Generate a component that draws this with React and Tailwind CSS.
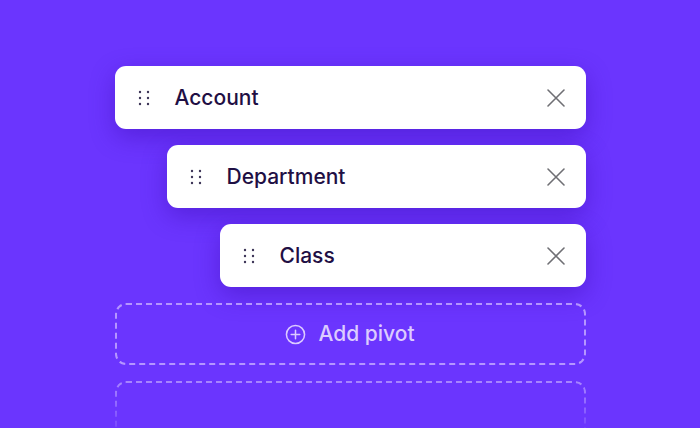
import React from "react";

function Grip() {
  return (
    <svg width="12" height="16" viewBox="0 0 12 16" className="shrink-0">
      {[0, 1].map((c) =>
        [0, 1, 2].map((r) => (
          <circle key={`${c}-${r}`} cx={2 + c * 8} cy={2 + r * 6} r="1.2" fill="#3d3558" />
        ))
      )}
    </svg>
  );
}

function Close() {
  return (
    <svg width="20" height="20" viewBox="0 0 20 20" className="shrink-0">
      <path d="M2 2L18 18M18 2L2 18" stroke="#6f6f74" strokeWidth="1.6" strokeLinecap="round" />
    </svg>
  );
}

function Card({ label, ml }) {
  return (
    <div
      className={`${ml} shrink-0 h-[63px] flex items-center bg-white rounded-[11px] pl-[23px] pr-[20px] shadow-[0_8px_24px_rgba(60,10,180,0.45)]`}
    >
      <Grip />
      <span className="ml-[25px] text-[21px] font-medium text-[#1f0f44] flex-1">{label}</span>
      <Close />
    </div>
  );
}

export default function App() {
  return (
    <div
      className="w-[700px] h-[428px] overflow-hidden bg-[#6b35fe] flex justify-center pt-[66px]"
      style={{ fontFamily: "Inter, 'Noto Sans', sans-serif" }}
    >
      <div className="w-[471px] flex flex-col gap-4">
        <Card label="Account" ml="ml-0" />
        <Card label="Department" ml="ml-[52px]" />
        <Card label="Class" ml="ml-[105px]" />
        <div className="shrink-0 h-[62px] rounded-[11px] border-2 border-dashed border-[#b596ff] flex items-center justify-center gap-[12px] text-[21px] font-medium text-[#dccbff]">
          <svg width="21" height="21" viewBox="0 0 22 22">
            <circle cx="11" cy="11" r="9.5" fill="none" stroke="#dccbff" strokeWidth="1.6" />
            <path d="M11 6.5V15.5M6.5 11H15.5" stroke="#dccbff" strokeWidth="1.6" strokeLinecap="round" />
          </svg>
          <span>Add pivot</span>
        </div>
        <div className="shrink-0 h-[62px] rounded-[11px] border-2 border-dashed border-[#a886ff] [mask-image:linear-gradient(to_bottom,black,transparent)]" />
      </div>
    </div>
  );
}
